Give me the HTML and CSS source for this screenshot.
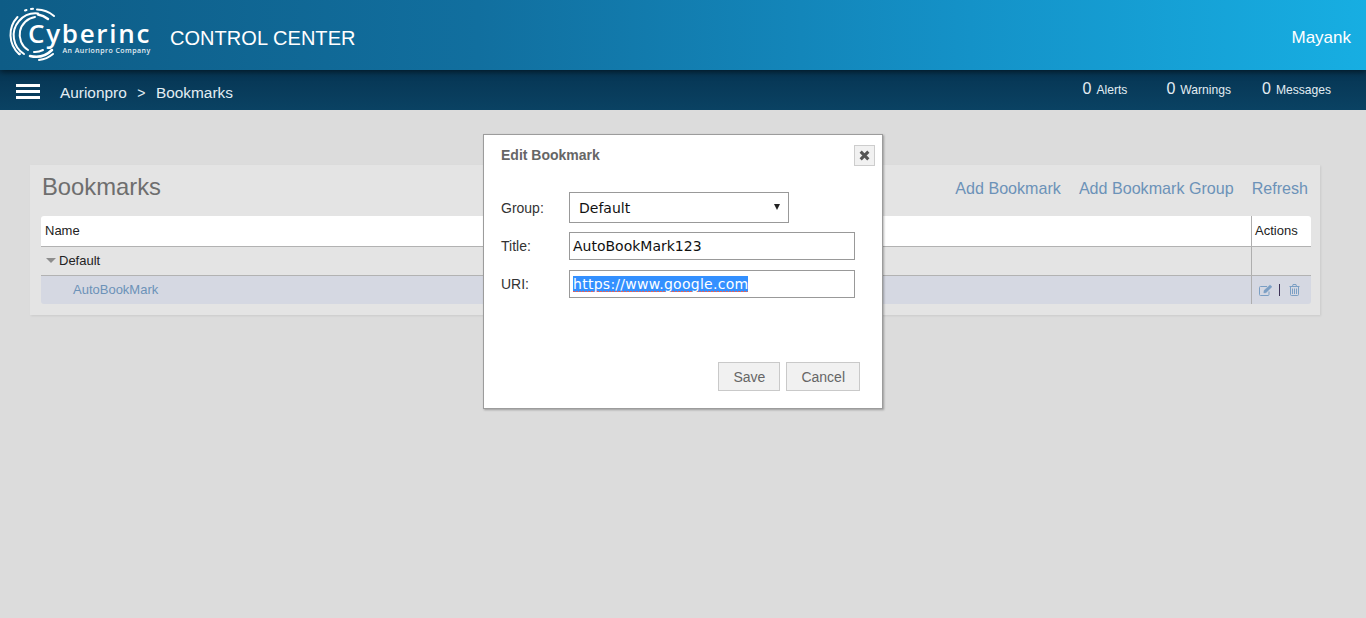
FILE: index.html
```html
<!DOCTYPE html>
<html lang="en">
<head>
<meta charset="utf-8">
<title>Bookmarks</title>
<link rel="stylesheet" href="styles.css">
</head>
<body>
<header class="topbar">
  <svg class="logo" width="160" height="70" viewBox="0 0 160 70">
    <g fill="none" stroke="#fff" stroke-linecap="round">
      <path d="M37 9.500 A26.500 26.500 0 0 1 54 16" stroke-width="2"/>
      <path d="M19 54 A26 26 0 0 1 17.500 17" stroke-width="2"/>
      <path d="M25 10.500 L26.500 10" stroke-width="2"/>
      <path d="M31 9 L33 8.800" stroke-width="2"/>
      <path d="M24 54 A22 22 0 0 1 19 21 A22 22 0 0 1 38 13.500" stroke-width="2"/>
      <path d="M28 50 A18 18 0 0 1 35 17" stroke-width="2"/>
      <path d="M38 14.500 A22 22 0 0 1 48 19" stroke-width="2.500"/>
      <path d="M30 56 A23 23 0 0 0 52 50" stroke-width="2.500"/>
      <path d="M39 60 A27 27 0 0 0 53 54" stroke-width="2"/>
      <path d="M34 52 A17 17 0 0 0 43 50" stroke-width="2"/>
      <circle cx="19.500" cy="54" r=".8" fill="#fff" stroke-width="1"/>
    </g>
    <text class="logo-name" x="28" y="43">Cyberinc</text>
    <text class="logo-sub" x="62.500" y="52.500">An Aurionpro Company</text>
  </svg>
  <div class="product">CONTROL CENTER</div>
  <div class="user">Mayank</div>
</header>
<nav class="navbar">
  <div class="burger"><span></span><span></span><span></span></div>
  <div class="crumbs"><span>Aurionpro</span><span class="sep">&gt;</span><span>Bookmarks</span></div>
  <ul class="counters">
    <li class="counter"><b>0</b>Alerts</li>
    <li class="counter"><b>0</b>Warnings</li>
    <li class="counter"><b>0</b>Messages</li>
  </ul>
</nav>
<main class="content">
  <section class="panel">
    <div class="panel-head">
      <h1>Bookmarks</h1>
      <div class="panel-links"><a>Add Bookmark</a><a>Add Bookmark Group</a><a>Refresh</a></div>
    </div>
    <div class="table">
      <div class="row row-head"><div class="cell-name">Name</div><div class="cell-act">Actions</div></div>
      <div class="row row-group"><div class="cell-name"><i class="tri"></i>Default</div><div class="cell-act"></div></div>
      <div class="row row-item">
        <div class="cell-name item-link">AutoBookMark</div>
        <div class="cell-act icons">
          <svg width="14" height="13" viewBox="0 0 14 13"><g fill="none" stroke="#7b9fc4" stroke-width="1"><path d="M10 7.500V10.500a1 1 0 0 1-1 1H1.500a1 1 0 0 1-1-1V3.500a1 1 0 0 1 1-1H8"/><path d="M5 6.500 11 .9 13 2.800 7 8.700 4.800 9Z" fill="#7b9fc4" stroke-width=".4"/></g></svg>
          <span class="bar"></span>
          <svg class="trash" width="11" height="12" viewBox="0 0 11 12"><g fill="none" stroke="#7b9fc4" stroke-width="1"><path d="M.5 2.500h10M1.500 2.500v8a1 1 0 0 0 1 1h6a1 1 0 0 0 1-1v-8M3.500 2.500 4 .5h3l.5 2M3.500 4.500v5.500M5.500 4.500v5.500M7.500 4.500v5.500"/></g></svg>
        </div>
      </div>
    </div>
  </section>
</main>
<div class="modal">
  <div class="modal-head">
    <h2>Edit Bookmark</h2>
    <div class="close"><svg width="11" height="11" viewBox="0 0 10 10"><path d="M1.500 1.500 8.500 8.500M8.500 1.500 1.500 8.500" stroke="#555" stroke-width="2.800"/></svg></div>
  </div>
  <div class="form">
    <div class="field field-group"><label>Group:</label><div class="select">Default<i class="caret"></i></div></div>
    <div class="field"><label>Title:</label><div class="input">AutoBookMark123</div></div>
    <div class="field"><label>URI:</label><div class="input"><span class="selected">https://www.google.com</span></div></div>
  </div>
  <div class="actions"><button>Save</button><button>Cancel</button></div>
</div>
</body>
</html>
```
FILE: styles.css
```css
* { box-sizing: border-box; }
html, body { margin: 0; height: 100%; }
body { background: #dcdcdc; font-family: "Liberation Sans", Arial, sans-serif; overflow: hidden; position: relative; }

.topbar { height: 70px; display: flex; align-items: center; color: #fff; background: linear-gradient(90deg, #0e5c86 0%, #116f9f 35%, #1491c7 70%, #17aee2 100%); position: relative; z-index: 1; box-shadow: 0 2px 6px rgba(0,0,0,.55); }
.logo { flex: none; }
.logo-name { font-family: "Open Sans", sans-serif; font-size: 26px; font-weight: 600; fill: #fff; letter-spacing: 1.700px; }
.logo-sub { font-family: "Open Sans", sans-serif; font-size: 7px; font-weight: 600; fill: #e4eef4; letter-spacing: .45px; }
.product { font-size: 20px; margin-left: 10px; padding-top: 6px; letter-spacing: .05px; }
.user { margin-left: auto; margin-right: 15px; font-size: 17px; padding-top: 6px; }

.navbar { height: 40px; display: flex; align-items: center; color: #e3edf3; background: linear-gradient(180deg, #063553 0%, #0a4263 100%); }
.burger { width: 24px; margin-left: 16px; display: flex; flex-direction: column; gap: 3px; margin-top: 3px; }
.burger span { height: 3px; background: #fff; display: block; }
.crumbs { margin-left: 20px; font-size: 15.400px; display: flex; padding-top: 5px; }
.sep { font-size: 14px; margin: 1px 10.500px 0; }
.counters { list-style: none; margin: 0 35px 0 auto; padding: 0; display: flex; gap: 31px; font-size: 12.100px; margin-top: -3px; }
.counter { display: flex; align-items: baseline; }
.counter:first-child { margin-right: 8px; }
.counter b { font-weight: 400; font-size: 16px; margin-right: 5px; }

.content { padding: 55px 46px 0 30px; }
.panel { height: 150px; background: #e4e4e4; padding: 0 9px 0 11px; box-shadow: 1px 1px 2px rgba(0,0,0,.08); }
.panel-head { height: 51px; display: flex; align-items: center; justify-content: space-between; }
.panel-head h1 { margin: 0 0 7px 1px; font-size: 23.800px; font-weight: 400; color: #6e6e6e; }
.panel-links { display: flex; gap: 18px; font-size: 16.100px; color: #6c92b8; margin-right: 3px; margin-bottom: 5px; }
.table { font-size: 13px; color: #222; }
.row { display: flex; height: 29px; border-bottom: 1px solid #b2b2b2; }
.cell-name { flex: 1; padding: 0 0 2px 4px; display: flex; align-items: center; }
.cell-act { width: 60px; padding: 0 0 2px 3px; border-left: 1px solid #aeaeae; display: flex; align-items: center; }
.row-head { height: 31px; background: #fff; border-radius: 3px 3px 0 0; }
.row-item { height: 28px; background: #d5d8e2; border-bottom: 0; border-radius: 0 0 3px 3px; }
.tri { width: 0; height: 0; border: 5px solid transparent; border-top: 5px solid #8d8d8d; border-bottom: 0; margin: 1px 3px 0 1px; }
.item-link { color: #6c92b8; padding-left: 32px; }
.icons { gap: 6px; padding: 0 0 0 7px; }
.bar { width: 1px; height: 12px; background: #3e3358; }
.trash { margin-left: 3px; }

.modal { position: absolute; left: 483px; top: 134px; width: 400px; height: 275px; background: #fff; border: 1px solid #9c9c9c; box-shadow: 1px 1px 2px rgba(0,0,0,.3); z-index: 2; padding: 0 22px 0 17px; display: flex; flex-direction: column; }
.modal-head { height: 41px; margin-bottom: 16px; padding-top: 10px; display: flex; align-items: flex-start; justify-content: space-between; margin-right: -15px; }
.modal-head h2 { margin: 2px 0 0; font-size: 14px; font-weight: 700; color: #666; }
.close { width: 21px; height: 21px; background: #f1f1f1; border: 1px solid #cdcdcd; display: flex; align-items: center; justify-content: center; }
.form { display: flex; flex-direction: column; gap: 10px; }
.field { display: flex; align-items: center; font-size: 14px; color: #333; }
.field-group { margin-bottom: -1px; }
.field label { width: 68px; }
.input, .select { font-family: "DejaVu Sans", Verdana, sans-serif; font-size: 14px; color: #111; background: #fff; border: 1px solid #999; display: flex; align-items: center; }
.input { width: 286px; height: 28px; padding-left: 3px; }
.select { width: 220px; height: 31px; padding-left: 9px; padding-top: 1px; position: relative; }
.caret { position: absolute; right: 8px; top: 11px; width: 0; height: 0; border: 3px solid transparent; border-top: 6px solid #222; border-bottom: 0; }
.selected { color: #fff; letter-spacing: .27px; background-color: #3390ff; background-image: repeating-linear-gradient(90deg, #e0605c 0 2px, transparent 2px 3px); background-size: 100% 1px; background-position: 0 15px; background-repeat: no-repeat; }
.actions { margin-top: auto; margin-bottom: 17px; display: flex; justify-content: flex-end; gap: 6px; }
.actions button { height: 29px; font-family: "Liberation Sans", Arial, sans-serif; font-size: 14px; color: #666; background: #f1f1f1; border: 1px solid #c9c9c9; border-radius: 0; padding: 0 14px; }
```
